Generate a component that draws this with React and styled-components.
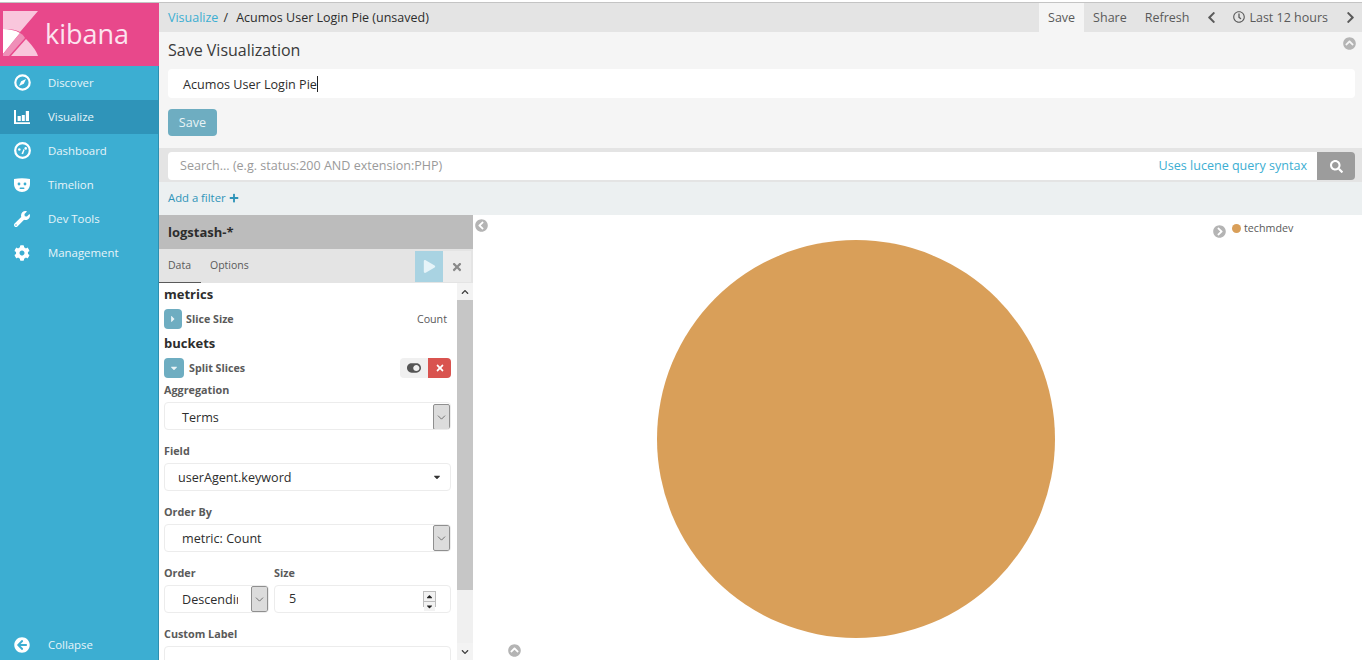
import React from 'react';
import styled, { createGlobalStyle } from 'styled-components';
import { ChevronDown } from 'lucide-react';
import {
  FaChevronLeft,
  FaChevronRight,
  FaChevronUp,
  FaChevronDown,
  FaSearch,
  FaPlus,
  FaTimes,
  FaPlay,
  FaWrench,
  FaCog,
  FaRegClock,
  FaToggleOn,
  FaCaretRight,
  FaCaretDown,
  FaCaretUp,
  FaChevronCircleUp,
  FaChevronCircleLeft,
  FaChevronCircleRight,
  FaArrowCircleLeft,
} from 'react-icons/fa';

const GlobalStyle = createGlobalStyle`
  html, body {
    margin: 0;
    height: 100%;
    overflow: hidden;
    background: #fff;
    font-family: "Open Sans", "Liberation Sans", sans-serif;
  }
  * { box-sizing: border-box; }
`;

const Logo = () => (
  <svg width="36" height="46" viewBox="0 0 36 46">
    <path d="M0 0H35L17 21C11 18 6 18 0 18Z" fill="#f9c6dc" />
    <path d="M0 18C6 18 12 19 17 22L0 43Z" fill="#fff" />
    <path d="M0 43L17 22C20 24 21 25 22 27L6 45H0Z" fill="#ef8fb8" />
    <path d="M8 45L23 28C28 33 33 39 35 45Z" fill="#f9c6dc" />
  </svg>
);

const CompassIcon = () => (
  <svg width="17" height="17" viewBox="0 0 17 17">
    <circle cx="8.5" cy="8.5" r="7.2" fill="none" stroke="#fff" strokeWidth="2.2" />
    <path d="M12 5L9.8 9.8L5 12L7.2 7.2Z" fill="#fff" />
  </svg>
);

const BarsIcon = () => (
  <svg width="16" height="14" viewBox="0 0 16 14" fill="#fff">
    <path d="M0 0H2V12.2H16V14H0Z" />
    <rect x="3.6" y="6" width="3.2" height="5" />
    <rect x="7.8" y="5" width="3" height="6" />
    <rect x="11.8" y="1" width="3.2" height="10" />
  </svg>
);

const DashIcon = () => (
  <svg width="17" height="17" viewBox="0 0 16 16">
    <circle cx="8" cy="8" r="6.9" fill="none" stroke="#fff" strokeWidth="2.1" />
    <circle cx="5" cy="7" r="1.2" fill="#fff" />
    <circle cx="11" cy="6" r="1.2" fill="#fff" />
    <path d="M7 11L9 6.5L10 7.5L8.5 11.5Z" fill="#fff" />
  </svg>
);

const MaskIcon = () => (
  <svg width="16" height="14" viewBox="0 0 16 14">
    <path d="M0 1C5 0 11 0 16 1V6C16 11 12 14 8 14C4 14 0 11 0 6Z" fill="#fff" />
    <circle cx="5" cy="6" r="1.4" fill="#3caed2" />
    <circle cx="11" cy="6" r="1.4" fill="#3caed2" />
    <rect x="5.5" y="9.4" width="5" height="1.6" rx="0.8" fill="#3caed2" />
  </svg>
);

const navItems = [
  { label: 'Discover', icon: <CompassIcon /> },
  { label: 'Visualize', icon: <BarsIcon />, active: true },
  { label: 'Dashboard', icon: <DashIcon /> },
  { label: 'Timelion', icon: <MaskIcon /> },
  { label: 'Dev Tools', icon: <FaWrench size={16} /> },
  { label: 'Management', icon: <FaCog size={16} /> },
];

const Page = styled.div`
  display: flex;
  flex-direction: column;
  width: 1362px;
  height: 660px;
  overflow: hidden;
  padding-top: 2px;
`;

const Columns = styled.div`
  flex: 1;
  display: flex;
  min-height: 0;
  border-top: 1px solid #c4c4c4;
`;

const Sidebar = styled.nav`
  width: 159px;
  flex: none;
  display: flex;
  flex-direction: column;
  background: #3caed2;
  border-right: 1px solid #2d8fb0;
`;

const Brand = styled.div`
  height: 63px;
  flex: none;
  display: flex;
  align-items: center;
  gap: 6px;
  padding: 0 0 2px 3px;
  background: #e8488b;
  color: #fce4ef;
  font-size: 27px;
  margin-right: -1px;
`;

const NavRow = styled.div`
  height: 34px;
  flex: none;
  display: flex;
  align-items: center;
  padding-left: 14px;
  padding-bottom: 1px;
  color: #e6f4f9;
  font-size: 11.4px;
  background: ${(p) => (p.$active ? '#2f94b9' : 'transparent')};
  margin-top: ${(p) => (p.$bottom ? 'auto' : '0')};
  margin-bottom: ${(p) => (p.$bottom ? '-2px' : '0')};
`;

const NavIcon = styled.span`
  width: 34px;
  flex: none;
  display: flex;
  align-items: center;
  color: #fff;
`;

const Main = styled.main`
  flex: 1;
  min-width: 0;
  display: flex;
  flex-direction: column;
`;

const TopBar = styled.div`
  height: 29px;
  flex: none;
  display: flex;
  align-items: stretch;
  background: #e4e4e4;
  font-size: 12.5px;
  color: #2d2d2d;
`;

const Crumbs = styled.div`
  flex: 1;
  display: flex;
  align-items: center;
  gap: 5px;
  padding: 0 0 1px 9px;
`;

const CrumbLink = styled.span`
  color: #3caed2;
`;

const TopLinks = styled.div`
  display: flex;
  align-items: stretch;
`;

const TopLink = styled.span`
  display: flex;
  align-items: center;
  gap: 4px;
  padding: 0 9px 1px;
  color: #5a5a5a;
  background: ${(p) => (p.$active ? '#f5f5f5' : 'transparent')};
`;

const TopArrow = styled.span`
  display: flex;
  align-items: center;
  padding: 0 ${(p) => (p.$edge ? '5px' : '6.5px')} 1px ${(p) => (p.$edge ? '7px' : '6.5px')};
  color: #5a5a5a;
`;

const SavePanel = styled.section`
  position: relative;
  height: 116px;
  flex: none;
  padding: 7px 7px 0 9px;
  background: #f5f5f5;
`;

const PanelTitle = styled.h2`
  margin: 0;
  height: 30px;
  font-size: 16px;
  font-weight: 400;
  line-height: 22px;
  color: #3a3a3a;
`;

const NameInput = styled.div`
  height: 29px;
  display: flex;
  align-items: center;
  padding: 1px 0 0 15px;
  background: #fff;
  border-radius: 4px;
  font-size: 12.6px;
  color: #2d2d2d;
`;

const Caret = styled.span`
  width: 1px;
  height: 16px;
  background: #222;
`;

const SaveButton = styled.button`
  display: block;
  width: 49px;
  height: 27px;
  margin-top: 11px;
  padding: 0;
  border: 0;
  border-radius: 4px;
  background: #6eadc1;
  color: #e9f3f6;
  font: 12.6px "Open Sans", sans-serif;
`;

const RoundToggle = styled.span`
  position: absolute;
  display: flex;
  color: #b4b4b4;
  top: ${(p) => p.$top}px;
  left: ${(p) => p.$left}px;
`;

const SearchBar = styled.div`
  height: 34px;
  flex: none;
  display: flex;
  padding: 4px 7px 2px 9px;
  background: #e4e4e4;
`;

const SearchField = styled.div`
  flex: 1;
  display: flex;
  align-items: center;
  justify-content: space-between;
  padding: 0 10px 2px 12px;
  background: #fff;
  border-radius: 4px 0 0 4px;
  font-size: 12.55px;
  color: #9a9a9a;
`;

const SyntaxLink = styled.span`
  color: #3caed2;
`;

const SearchButton = styled.span`
  width: 38px;
  display: flex;
  align-items: center;
  justify-content: center;
  background: #9c9c9c;
  border-radius: 0 4px 4px 0;
  color: #fff;
  font-size: 13px;
`;

const FilterBar = styled.div`
  height: 33px;
  flex: none;
  display: flex;
  align-items: center;
  gap: 3px;
  padding: 0 0 2px 9px;
  background: #ecf0f1;
  color: #2f94b9;
  font-size: 11.3px;
`;

const Workspace = styled.div`
  flex: 1;
  min-height: 0;
  display: flex;
`;

const Editor = styled.aside`
  width: 314px;
  flex: none;
  display: flex;
  flex-direction: column;
  min-height: 0;
`;

const IndexTitle = styled.div`
  height: 34px;
  flex: none;
  display: flex;
  align-items: center;
  padding-left: 9px;
  background: #bcbcbc;
  color: #2d2d2d;
  font-size: 13px;
  font-weight: 700;
`;

const TabRow = styled.div`
  height: 34px;
  flex: none;
  display: flex;
  align-items: stretch;
  background: #e4e4e4;
  font-size: 10.5px;
  color: #5a5a5a;
`;

const Tab = styled.span`
  display: flex;
  align-items: center;
  padding: 0 9px 2px;
  width: ${(p) => (p.$active ? '42px' : 'auto')};
  border-bottom: ${(p) => (p.$active ? '1px solid #5a5a5a' : '0')};
`;

const TabActions = styled.div`
  margin-left: auto;
  display: flex;
  padding: 2px 2px 1px 0;
`;

const ApplyButton = styled.span`
  width: 28px;
  display: flex;
  align-items: center;
  justify-content: center;
  background: #a9d3e2;
  color: #e6f4f9;
  font-size: 13px;
`;

const DiscardButton = styled.span`
  width: 28px;
  display: flex;
  align-items: center;
  justify-content: center;
  background: #ececec;
  color: #8a8a8a;
  font-size: 12px;
`;

const EditorBody = styled.div`
  flex: 1;
  min-height: 0;
  display: flex;
  overflow: hidden;
`;

const Form = styled.div`
  flex: 1;
  min-width: 0;
  padding: 0 6px 0 5px;
  background: #fff;
`;

const Scrollbar = styled.div`
  width: 16px;
  flex: none;
  display: flex;
  flex-direction: column;
  background: #f0f0f0;
  color: #404040;
`;

const ScrollArrow = styled.span`
  height: 17px;
  flex: none;
  display: flex;
  align-items: center;
  justify-content: center;
  font-size: 8px;
  background: #f3f3f3;
`;

const ScrollThumb = styled.div`
  height: 290px;
  flex: none;
  background: #c6c6c6;
`;

const ScrollTrack = styled.div`
  flex: 1;
`;

const GroupTitle = styled.div`
  height: 23px;
  display: flex;
  align-items: center;
  padding-bottom: 2px;
  font-size: 13px;
  font-weight: 700;
  color: #2d2d2d;
`;

const AggRow = styled.div`
  height: 26px;
  display: flex;
  align-items: center;
  font-size: 10.7px;
  font-weight: 700;
  color: #5a5a5a;
`;

const AggToggle = styled.span`
  width: ${(p) => p.$w}px;
  height: 20px;
  flex: none;
  display: flex;
  align-items: center;
  justify-content: center;
  margin-right: ${(p) => (p.$w === 20 ? 5 : 4)}px;
  background: #6eadc1;
  border-radius: 4px;
  color: #e9f3f6;
  font-size: 10px;
`;

const AggValue = styled.span`
  margin-left: auto;
  padding-right: 4px;
  font-weight: 400;
  font-size: 10.7px;
`;

const AggActions = styled.div`
  margin-left: auto;
  display: flex;
  height: 20px;
`;

const ToggleButton = styled.span`
  width: 28px;
  display: flex;
  align-items: center;
  justify-content: center;
  background: #f0f0f0;
  border-radius: 4px 0 0 4px;
  color: #555;
  font-size: 14px;
`;

const RemoveButton = styled.span`
  width: 23px;
  display: flex;
  align-items: center;
  justify-content: center;
  background: #d9534f;
  border-radius: 0 4px 4px 0;
  color: #fff;
  font-size: 10px;
`;

const Label = styled.div`
  height: 17px;
  display: flex;
  align-items: center;
  padding-bottom: 2px;
  font-size: 10.8px;
  font-weight: 700;
  color: #5a5a5a;
`;

const FieldBlock = styled.div`
  margin-bottom: 13px;
  padding-top: ${(p) => p.$top ?? 0}px;
`;

const Control = styled.div`
  height: 28px;
  display: flex;
  align-items: center;
  margin-top: 3px;
  padding-top: ${(p) => p.$nudge ?? 0}px;
  padding-left: ${(p) => p.$pad ?? 17}px;
  background: #fff;
  border: 1px solid #ececec;
  border-radius: 4px;
  font-size: 12.6px;
  color: #2d2d2d;
  overflow: hidden;
`;

const SelectArrow = styled.span`
  width: 17px;
  height: 26px;
  flex: none;
  margin-left: auto;
  display: flex;
  align-items: center;
  justify-content: center;
  background: #dcdcdc;
  border: 1px solid #8f8f8f;
  border-radius: 2px;
  color: #5a5a5a;
`;

const DropCaret = styled.span`
  margin-left: auto;
  display: flex;
  padding-right: 8px;
  color: #333;
  font-size: 10px;
`;

const OrderRow = styled.div`
  display: grid;
  grid-template-columns: 105px 1fr;
  gap: 5px;
  margin-bottom: 13px;
`;

const ClippedText = styled.span`
  flex: 1;
  min-width: 0;
  overflow: hidden;
  white-space: nowrap;
  margin-right: 13px;
  padding-top: 1px;
`;

const SizeValue = styled.span`
  margin-top: -1px;
`;

const Spinner = styled.span`
  margin-left: auto;
  margin-right: 14px;
  width: 13px;
  height: 16px;
  display: flex;
  flex-direction: column;
  gap: 1px;
  background: #bdbdbd;
  padding: 1px;
`;

const SpinnerPart = styled.span`
  flex: 1;
  display: flex;
  align-items: center;
  justify-content: center;
  background: #f2f2f2;
  color: #222;
  font-size: 9px;
`;

const Vis = styled.section`
  position: relative;
  flex: 1;
  min-width: 0;
  display: flex;
  padding: 25px 0 0 184px;
  background: #fff;
`;

const Legend = styled.div`
  position: absolute;
  top: 6px;
  left: 759px;
  display: flex;
  align-items: center;
  gap: 3px;
  font-size: 10.7px;
  color: #5a5a5a;
`;

const LegendDot = styled.span`
  width: 9px;
  height: 9px;
  border-radius: 50%;
  background: #d99f59;
`;

const Pie = styled.svg`
  display: block;
  flex: none;
`;

const ThinArrow = () => <ChevronDown size={13} strokeWidth={1.5} />;

export default function App() {
  return (
    <Page>
      <GlobalStyle />
      <Columns>
        <Sidebar>
          <Brand>
            <Logo />
            <span>kibana</span>
          </Brand>
          {navItems.map((item) => (
            <NavRow key={item.label} $active={item.active}>
              <NavIcon>{item.icon}</NavIcon>
              {item.label}
            </NavRow>
          ))}
          <NavRow $bottom>
            <NavIcon>
              <FaArrowCircleLeft size={16} />
            </NavIcon>
            Collapse
          </NavRow>
        </Sidebar>
        <Main>
          <TopBar>
            <Crumbs>
              <CrumbLink>Visualize</CrumbLink>
              <span>/</span>
              <span>&nbsp;Acumos User Login Pie (unsaved)</span>
            </Crumbs>
            <TopLinks>
              <TopLink $active>Save</TopLink>
              <TopLink>Share</TopLink>
              <TopLink>Refresh</TopLink>
              <TopArrow>
                <FaChevronLeft size={13} />
              </TopArrow>
              <TopLink>
                <FaRegClock size={12} />
                Last 12 hours
              </TopLink>
              <TopArrow $edge>
                <FaChevronRight size={13} />
              </TopArrow>
            </TopLinks>
          </TopBar>
          <SavePanel>
            <RoundToggle $top={5} $left={1184}>
              <FaChevronCircleUp size={13} />
            </RoundToggle>
            <PanelTitle>Save Visualization</PanelTitle>
            <NameInput>
              Acumos User Login Pie
              <Caret />
            </NameInput>
            <SaveButton>Save</SaveButton>
          </SavePanel>
          <SearchBar>
            <SearchField>
              <span>Search... (e.g. status:200 AND extension:PHP)</span>
              <SyntaxLink>Uses lucene query syntax</SyntaxLink>
            </SearchField>
            <SearchButton>
              <FaSearch />
            </SearchButton>
          </SearchBar>
          <FilterBar>
            Add a filter <FaPlus size={10} />
          </FilterBar>
          <Workspace>
            <Editor>
              <IndexTitle>logstash-*</IndexTitle>
              <TabRow>
                <Tab $active>Data</Tab>
                <Tab>Options</Tab>
                <TabActions>
                  <ApplyButton>
                    <FaPlay />
                  </ApplyButton>
                  <DiscardButton>
                    <FaTimes />
                  </DiscardButton>
                </TabActions>
              </TabRow>
              <EditorBody>
                <Form>
                  <GroupTitle>metrics</GroupTitle>
                  <AggRow>
                    <AggToggle $w={18}>
                      <FaCaretRight />
                    </AggToggle>
                    Slice Size
                    <AggValue>Count</AggValue>
                  </AggRow>
                  <GroupTitle>buckets</GroupTitle>
                  <AggRow>
                    <AggToggle $w={20}>
                      <FaCaretDown />
                    </AggToggle>
                    Split Slices
                    <AggActions>
                      <ToggleButton>
                        <FaToggleOn />
                      </ToggleButton>
                      <RemoveButton>
                        <FaTimes />
                      </RemoveButton>
                    </AggActions>
                  </AggRow>
                  <FieldBlock $top={1}>
                    <Label>Aggregation</Label>
                    <Control $nudge={2}>
                      Terms
                      <SelectArrow>
                        <ThinArrow />
                      </SelectArrow>
                    </Control>
                  </FieldBlock>
                  <FieldBlock>
                    <Label>Field</Label>
                    <Control $pad={13}>
                      userAgent.keyword
                      <DropCaret>
                        <FaCaretDown />
                      </DropCaret>
                    </Control>
                  </FieldBlock>
                  <FieldBlock>
                    <Label>Order By</Label>
                    <Control>
                      metric: Count
                      <SelectArrow>
                        <ThinArrow />
                      </SelectArrow>
                    </Control>
                  </FieldBlock>
                  <OrderRow>
                    <div>
                      <Label>Order</Label>
                      <Control>
                        <ClippedText>Descending</ClippedText>
                        <SelectArrow>
                          <ThinArrow />
                        </SelectArrow>
                      </Control>
                    </div>
                    <div>
                      <Label>Size</Label>
                      <Control $pad={14}>
                        <SizeValue>5</SizeValue>
                        <Spinner>
                          <SpinnerPart>
                            <FaCaretUp />
                          </SpinnerPart>
                          <SpinnerPart>
                            <FaCaretDown />
                          </SpinnerPart>
                        </Spinner>
                      </Control>
                    </div>
                  </OrderRow>
                  <FieldBlock>
                    <Label>Custom Label</Label>
                    <Control />
                  </FieldBlock>
                </Form>
                <Scrollbar>
                  <ScrollArrow>
                    <FaChevronUp />
                  </ScrollArrow>
                  <ScrollThumb />
                  <ScrollTrack />
                  <ScrollArrow>
                    <FaChevronDown />
                  </ScrollArrow>
                </Scrollbar>
              </EditorBody>
            </Editor>
            <Vis>
              <RoundToggle $top={4} $left={2}>
                <FaChevronCircleLeft size={13} />
              </RoundToggle>
              <RoundToggle $top={429} $left={35}>
                <FaChevronCircleUp size={13} />
              </RoundToggle>
              <RoundToggle $top={10} $left={740}>
                <FaChevronCircleRight size={13} />
              </RoundToggle>
              <Legend>
                <LegendDot />
                techmdev
              </Legend>
              <Pie width="398" height="398" viewBox="0 0 398 398">
                <circle cx="199" cy="199" r="199" fill="#d99f59" />
              </Pie>
            </Vis>
          </Workspace>
        </Main>
      </Columns>
    </Page>
  );
}
